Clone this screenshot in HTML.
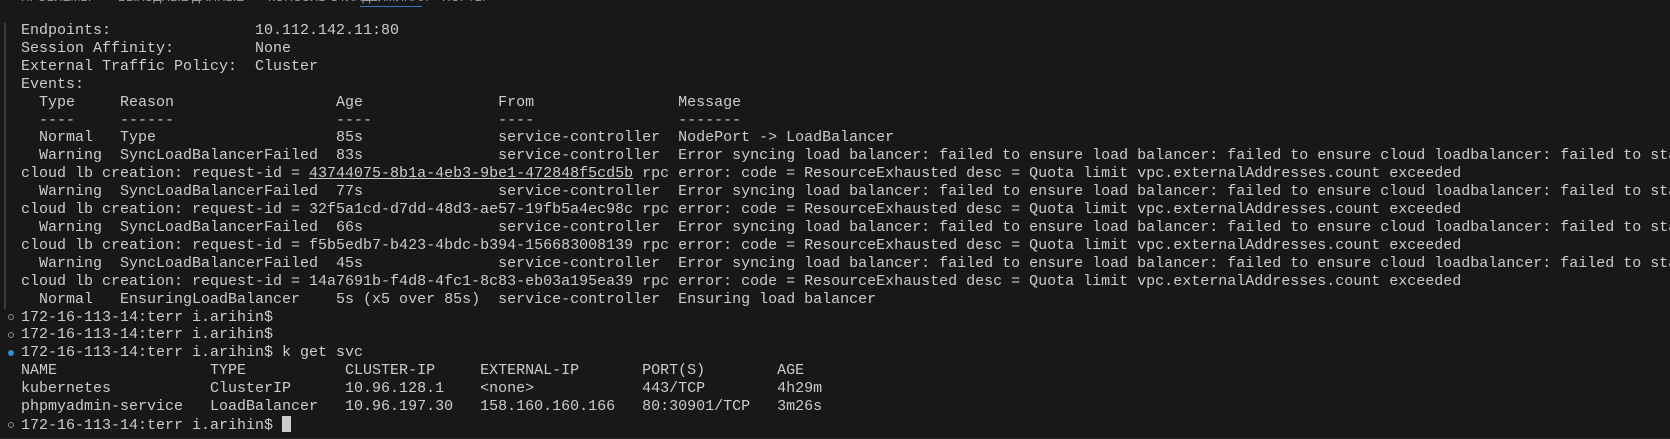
<!DOCTYPE html>
<html><head><meta charset="utf-8"><style>
html,body{margin:0;padding:0;background:#181818;width:1670px;height:439px;overflow:hidden;position:relative}
.tabs{position:absolute;top:-10px;left:0;font:12px "Liberation Sans","DejaVu Sans",sans-serif;color:#9d9d9d;white-space:nowrap}
.tabs span{position:absolute;top:0}
.ul{position:absolute;left:360px;top:6px;width:62px;height:1px;background:#2b79c2}
.bar{position:absolute;left:4px;top:23px;width:2px;height:286px;background:#3c3c3c}
pre{position:absolute;left:21px;top:22px;margin:0;font:15px/17.9px "Liberation Mono","DejaVu Sans Mono",monospace;color:#cccccc;white-space:pre}
.u{text-decoration:underline}
.dot{position:absolute;left:8px;width:6px;height:6px;border-radius:50%;border:1px solid #8a8a8a;box-sizing:border-box}
.dot.b{background:#2f8fd0;border-color:#2f8fd0}
.cur{display:inline-block;width:9px;height:16px;background:#cccccc;vertical-align:-3px}
.bot{position:absolute;left:0;top:438px;width:1670px;height:1px;background:#2a2a2a}
</style></head><body>
<div class="tabs"><span style="left:21px">ПРОБЛЕМЫ</span><span style="left:118px">ВЫХОДНЫЕ ДАННЫЕ</span><span style="left:268px">КОНСОЛЬ ОТЛАДКИ</span><span style="left:362px">ТЕРМИНАЛ</span><span style="left:442px">ПОРТЫ</span></div>
<div class="ul"></div>
<div class="bar"></div>
<div class="dot" style="top:314px"></div>
<div class="dot" style="top:332px"></div>
<div class="dot b" style="top:350px"></div>
<div class="dot" style="top:422px"></div>
<pre>Endpoints:                10.112.142.11:80
Session Affinity:         None
External Traffic Policy:  Cluster
Events:
  Type     Reason                  Age               From                Message
  ----     ------                  ----              ----                -------
  Normal   Type                    85s               service-controller  NodePort -&gt; LoadBalancer
  Warning  SyncLoadBalancerFailed  83s               service-controller  Error syncing load balancer: failed to ensure load balancer: failed to ensure cloud loadbalancer: failed to start
cloud lb creation: request-id = <span class="u">43744075-8b1a-4eb3-9be1-472848f5cd5b</span> rpc error: code = ResourceExhausted desc = Quota limit vpc.externalAddresses.count exceeded
  Warning  SyncLoadBalancerFailed  77s               service-controller  Error syncing load balancer: failed to ensure load balancer: failed to ensure cloud loadbalancer: failed to start
cloud lb creation: request-id = 32f5a1cd-d7dd-48d3-ae57-19fb5a4ec98c rpc error: code = ResourceExhausted desc = Quota limit vpc.externalAddresses.count exceeded
  Warning  SyncLoadBalancerFailed  66s               service-controller  Error syncing load balancer: failed to ensure load balancer: failed to ensure cloud loadbalancer: failed to start
cloud lb creation: request-id = f5b5edb7-b423-4bdc-b394-156683008139 rpc error: code = ResourceExhausted desc = Quota limit vpc.externalAddresses.count exceeded
  Warning  SyncLoadBalancerFailed  45s               service-controller  Error syncing load balancer: failed to ensure load balancer: failed to ensure cloud loadbalancer: failed to start
cloud lb creation: request-id = 14a7691b-f4d8-4fc1-8c83-eb03a195ea39 rpc error: code = ResourceExhausted desc = Quota limit vpc.externalAddresses.count exceeded
  Normal   EnsuringLoadBalancer    5s (x5 over 85s)  service-controller  Ensuring load balancer
172-16-113-14:terr i.arihin$
172-16-113-14:terr i.arihin$
172-16-113-14:terr i.arihin$ k get svc
NAME                 TYPE           CLUSTER-IP     EXTERNAL-IP       PORT(S)        AGE
kubernetes           ClusterIP      10.96.128.1    &lt;none&gt;            443/TCP        4h29m
phpmyadmin-service   LoadBalancer   10.96.197.30   158.160.160.166   80:30901/TCP   3m26s
172-16-113-14:terr i.arihin$ <span class="cur"></span></pre>
<div class="bot"></div>
</body></html>
